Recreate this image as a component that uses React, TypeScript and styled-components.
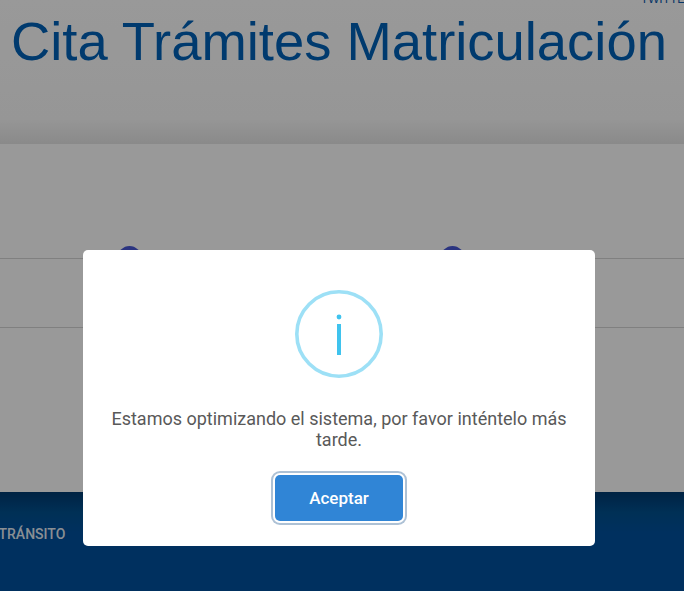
import styled, { createGlobalStyle } from "styled-components";

const GlobalStyle = createGlobalStyle`
  html, body {
    margin: 0;
    padding: 0;
    background: #fff;
    overflow: hidden;
  }
  * {
    box-sizing: border-box;
  }
`;

const Page = styled.div`
  height: 591px;
  display: flex;
  flex-direction: column;
  overflow: hidden;
`;

const Header = styled.header`
  height: 144px;
  flex: none;
  padding: 0 0 0 11px;
  background: linear-gradient(to bottom, #ffffff 0, #fbfbfb 82%, #e6e6e6 100%),
    #fff;
  overflow: hidden;
`;

const TopLink = styled.div`
  height: 15px;
  margin-top: -8px;
  margin-right: -10px;
  text-align: right;
  white-space: nowrap;
  font: 12px/15px "Liberation Sans", Arial, sans-serif;
  color: #0b5cad;
`;

const Title = styled.h1`
  margin: 5px 0 0;
  font: 400 54.4px/60px "Liberation Sans", Arial, sans-serif;
  color: #0062b8;
  white-space: nowrap;
`;

const Main = styled.main`
  flex: 1;
  background: #fff;
  padding-top: 102px;
`;

const Steps = styled.div`
  height: 12px;
  display: flex;
  padding-left: 118px;
  gap: 300px;
`;

const StepDot = styled.span`
  width: 23px;
  height: 23px;
  flex: none;
  border-radius: 50%;
  background: #4858d6;
`;

const Divider = styled.div`
  height: 69px;
  border-top: 1px solid #d6d6d6;
`;

const Footer = styled.footer`
  height: 99px;
  flex: none;
  padding-top: 34px;
  background: linear-gradient(to bottom, #003a70 0, #00508f 20px, #00509e 40px);
`;

const FooterLink = styled.a`
  display: block;
  margin-left: -1.5px;
  font: 500 14px/17px Roboto, Arial, sans-serif;
  color: rgba(255, 255, 255, 0.92);
`;

const Overlay = styled.div`
  position: fixed;
  inset: 0;
  background: rgba(0, 0, 0, 0.4);
`;

const Modal = styled.div`
  position: absolute;
  left: 83px;
  top: 250px;
  width: 512px;
  height: 296px;
  padding-top: 40px;
  background: #fff;
  border-radius: 5px;
  display: flex;
  flex-direction: column;
  align-items: center;
`;

const InfoIcon = styled.svg`
  width: 88px;
  height: 88px;
  flex: none;
  display: block;
`;

const Message = styled.p`
  width: 470px;
  margin: 30px 0 0;
  text-align: center;
  font: 400 18px/21px Roboto, Arial, sans-serif;
  color: #595959;
`;

const ConfirmButton = styled.button`
  width: 128px;
  height: 46px;
  margin-top: 25px;
  border: 0;
  border-radius: 5px;
  background: #3085d6;
  color: #fff;
  font: 500 17px/20px Roboto, Arial, sans-serif;
  box-shadow: 0 0 0 2px #fff, 0 0 0 4px rgba(50, 100, 150, 0.4);
`;

export default function App() {
  return (
    <>
      <GlobalStyle />
      <Page>
        <Header>
          <TopLink>TWITTER</TopLink>
          <Title>Cita Trámites Matriculación</Title>
        </Header>
        <Main>
          <Steps>
            <StepDot />
            <StepDot />
          </Steps>
          <Divider />
          <Divider />
        </Main>
        <Footer>
          <FooterLink>TRÁNSITO</FooterLink>
        </Footer>
      </Page>
      <Overlay>
        <Modal>
          <InfoIcon viewBox="0 0 88 88">
            <circle cx="44" cy="44" r="42.2" fill="none" stroke="#9de0f6" strokeWidth="3.6" />
            <circle cx="44" cy="27" r="2.4" fill="#3fc3ee" />
            <rect x="42" y="34" width="4" height="31" fill="#3fc3ee" />
          </InfoIcon>
          <Message>Estamos optimizando el sistema, por favor inténtelo más tarde.</Message>
          <ConfirmButton type="button">Aceptar</ConfirmButton>
        </Modal>
      </Overlay>
    </>
  );
}
